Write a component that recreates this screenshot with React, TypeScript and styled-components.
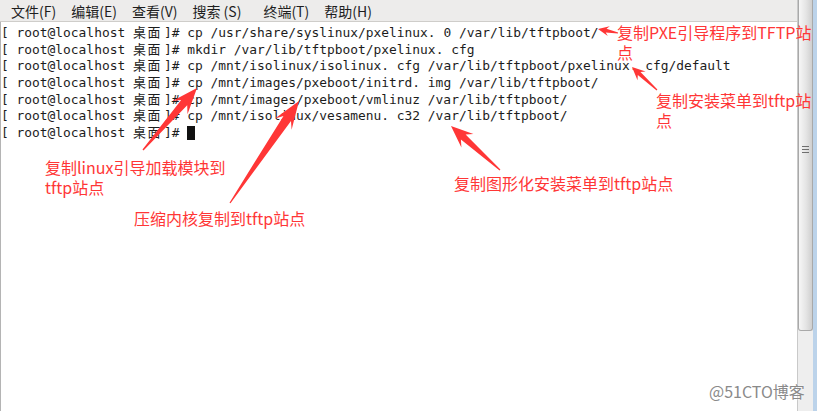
import React from "react";
import styled, { createGlobalStyle } from "styled-components";

const GlobalStyle = createGlobalStyle`
  html, body {
    margin: 0;
    padding: 0;
    background: #ffffff;
    overflow: hidden;
  }
`;

const RED = "#ff3636";

const Window = styled.div`
  position: relative;
  display: flex;
  width: 817px;
  height: 411px;
  overflow: hidden;
  background: #ffffff;
`;

const Main = styled.div`
  display: flex;
  flex-direction: column;
  width: 797px;
`;

const MenuBar = styled.div`
  display: flex;
  align-items: center;
  height: 21px;
  padding-left: 11px;
  background: #edeceb;
  border-bottom: 1px solid #cfcdca;
  font-family: "Noto Sans CJK SC", "DejaVu Sans", sans-serif;
  font-size: 14px;
  color: #1e1e1e;
`;

const MenuItem = styled.span<{ $gap: number }>`
  margin-right: ${(p) => p.$gap}px;
  white-space: pre;
`;

const Terminal = styled.div`
  flex: 1;
  padding: 3px 0 0 0;
  border-left: 1px solid #b4b4b4;
  font-family: "DejaVu Sans Mono", "Noto Sans CJK SC", monospace;
  font-size: 12.9px;
  line-height: 16.7px;
  color: #1c1c1c;
`;

const Line = styled.div`
  white-space: pre;
  height: 16.7px;
`;

const Wide = styled.span`
  display: inline-block;
  width: 4ch;
  letter-spacing: 0.2ch;
`;

const Dot = styled.span`
  display: inline-block;
  width: 2ch;
`;

const Cursor = styled.span`
  display: inline-block;
  width: 8px;
  height: 14px;
  background: #111111;
  vertical-align: -3px;
`;

const Scrollbar = styled.div`
  display: flex;
  flex-direction: column;
  width: 16px;
  background: #eeeeee;
  border-left: 1px solid #c9c9c9;
  box-sizing: border-box;
`;

const Thumb = styled.div`
  height: 331px;
  display: flex;
  align-items: center;
  justify-content: center;
  background: linear-gradient(to right, #f6f6f6, #e4e4e4 55%, #cfcfcf);
  border: 1px solid #a9a9a9;
  border-top: none;
  border-radius: 0 0 3px 3px;
  box-sizing: border-box;
`;

const Grip = styled.div`
  width: 7px;
  height: 7px;
  margin-top: -31px;
  background: repeating-linear-gradient(
    to bottom,
    #6f6f6f 0,
    #6f6f6f 1px,
    transparent 1px,
    transparent 3px
  );
`;

const Edge = styled.div`
  width: 4px;
  background: #bcd3ea;
`;

const Overlay = styled.svg`
  position: absolute;
  left: 0;
  top: 0;
  width: 817px;
  height: 411px;
  pointer-events: none;
`;

const Note = styled.div<{ $x: number; $y: number; $w?: number }>`
  position: absolute;
  left: ${(p) => p.$x}px;
  top: ${(p) => p.$y}px;
  width: ${(p) => (p.$w ? `${p.$w}px` : "auto")};
  white-space: ${(p) => (p.$w ? "normal" : "nowrap")};
  font-family: "Noto Sans CJK SC", "DejaVu Sans", sans-serif;
  font-size: 16px;
  line-height: 20px;
  color: ${RED};
  word-break: break-all;
`;

const Watermark = styled.div`
  position: absolute;
  left: 709px;
  top: 381px;
  font-family: "Noto Sans CJK SC", "DejaVu Sans", sans-serif;
  font-size: 16px;
  line-height: 20px;
  color: #8a8a8a;
  text-shadow: 0 0 2px #ffffff, 0 0 1px #ffffff;
`;

const menus = [
  { label: "文件(F)", gap: 15 },
  { label: "编辑(E)", gap: 15 },
  { label: "查看(V)", gap: 15 },
  { label: "搜索 (S)", gap: 22 },
  { label: "终端(T)", gap: 15 },
  { label: "帮助(H)", gap: 0 },
];

const commands = [
  "cp /usr/share/syslinux/pxelinux.0 /var/lib/tftpboot/",
  "mkdir /var/lib/tftpboot/pxelinux.cfg",
  "cp /mnt/isolinux/isolinux.cfg /var/lib/tftpboot/pxelinux.cfg/default",
  "cp /mnt/images/pxeboot/initrd.img /var/lib/tftpboot/",
  "cp /mnt/images/pxeboot/vmlinuz /var/lib/tftpboot/",
  "cp /mnt/isolinux/vesamenu.c32 /var/lib/tftpboot/",
];

// the terminal draws "." as a full-width glyph
function Command({ text }: { text: string }) {
  const parts = text.split(".");
  return (
    <>
      {parts.map((part, i) => (
        <React.Fragment key={i}>
          {part}
          {i < parts.length - 1 && <Dot>.</Dot>}
        </React.Fragment>
      ))}
    </>
  );
}

function Prompt() {
  return (
    <>
      {"[ root@localhost "}
      <Wide>桌面</Wide>
      {"]# "}
    </>
  );
}

type ArrowSpec = {
  tail: [number, number];
  tip: [number, number];
  head: number;
  width: number;
  neck: number;
};

const arrows: ArrowSpec[] = [
  { tail: [618, 33], tip: [598, 29], head: 11, width: 5, neck: 2 },
  { tail: [657, 90], tip: [632, 67], head: 13, width: 6, neck: 2 },
  { tail: [143, 150], tip: [197, 88], head: 26, width: 10, neck: 4 },
  { tail: [230, 203], tip: [299, 101], head: 28, width: 10, neck: 4.5 },
  { tail: [500, 170], tip: [451, 126], head: 22, width: 9, neck: 3.5 },
];

function arrowPoints({ tail, tip, head, width, neck }: ArrowSpec) {
  const [tx, ty] = tail;
  const [hx, hy] = tip;
  const len = Math.hypot(hx - tx, hy - ty);
  const ux = (hx - tx) / len;
  const uy = (hy - ty) / len;
  const nx = -uy;
  const ny = ux;
  const bx = hx - ux * head;
  const by = hy - uy * head;
  const kx = bx + ux * head * 0.25;
  const ky = by + uy * head * 0.25;
  const pts = [
    [tx + nx * 0.6, ty + ny * 0.6],
    [kx + nx * neck, ky + ny * neck],
    [bx + nx * width, by + ny * width],
    [hx, hy],
    [bx - nx * width, by - ny * width],
    [kx - nx * neck, ky - ny * neck],
    [tx - nx * 0.6, ty - ny * 0.6],
  ];
  return pts.map((p) => `${p[0].toFixed(1)},${p[1].toFixed(1)}`).join(" ");
}

export default function App() {
  return (
    <>
      <GlobalStyle />
      <Window>
        <Main>
          <MenuBar>
            {menus.map((m) => (
              <MenuItem key={m.label} $gap={m.gap}>
                {m.label}
              </MenuItem>
            ))}
          </MenuBar>
          <Terminal>
            {commands.map((cmd) => (
              <Line key={cmd}>
                <Prompt />
                <Command text={cmd} />
              </Line>
            ))}
            <Line>
              <Prompt />
              <Cursor />
            </Line>
          </Terminal>
        </Main>
        <Scrollbar>
          <Thumb>
            <Grip />
          </Thumb>
        </Scrollbar>
        <Edge />

        <Overlay viewBox="0 0 817 411">
          {arrows.map((a, i) => (
            <polygon key={i} points={arrowPoints(a)} fill={RED} />
          ))}
        </Overlay>

        <Note $x={617} $y={22} $w={196}>
          复制PXE引导程序到TFTP站点
        </Note>
        <Note $x={656} $y={90} $w={156}>
          复制安装菜单到tftp站点
        </Note>
        <Note $x={45} $y={157} $w={182}>
          复制linux引导加载模块到tftp站点
        </Note>
        <Note $x={134} $y={208}>
          压缩内核复制到tftp站点
        </Note>
        <Note $x={454} $y={173}>
          复制图形化安装菜单到tftp站点
        </Note>
        <Watermark>@51CTO博客</Watermark>
      </Window>
    </>
  );
}
